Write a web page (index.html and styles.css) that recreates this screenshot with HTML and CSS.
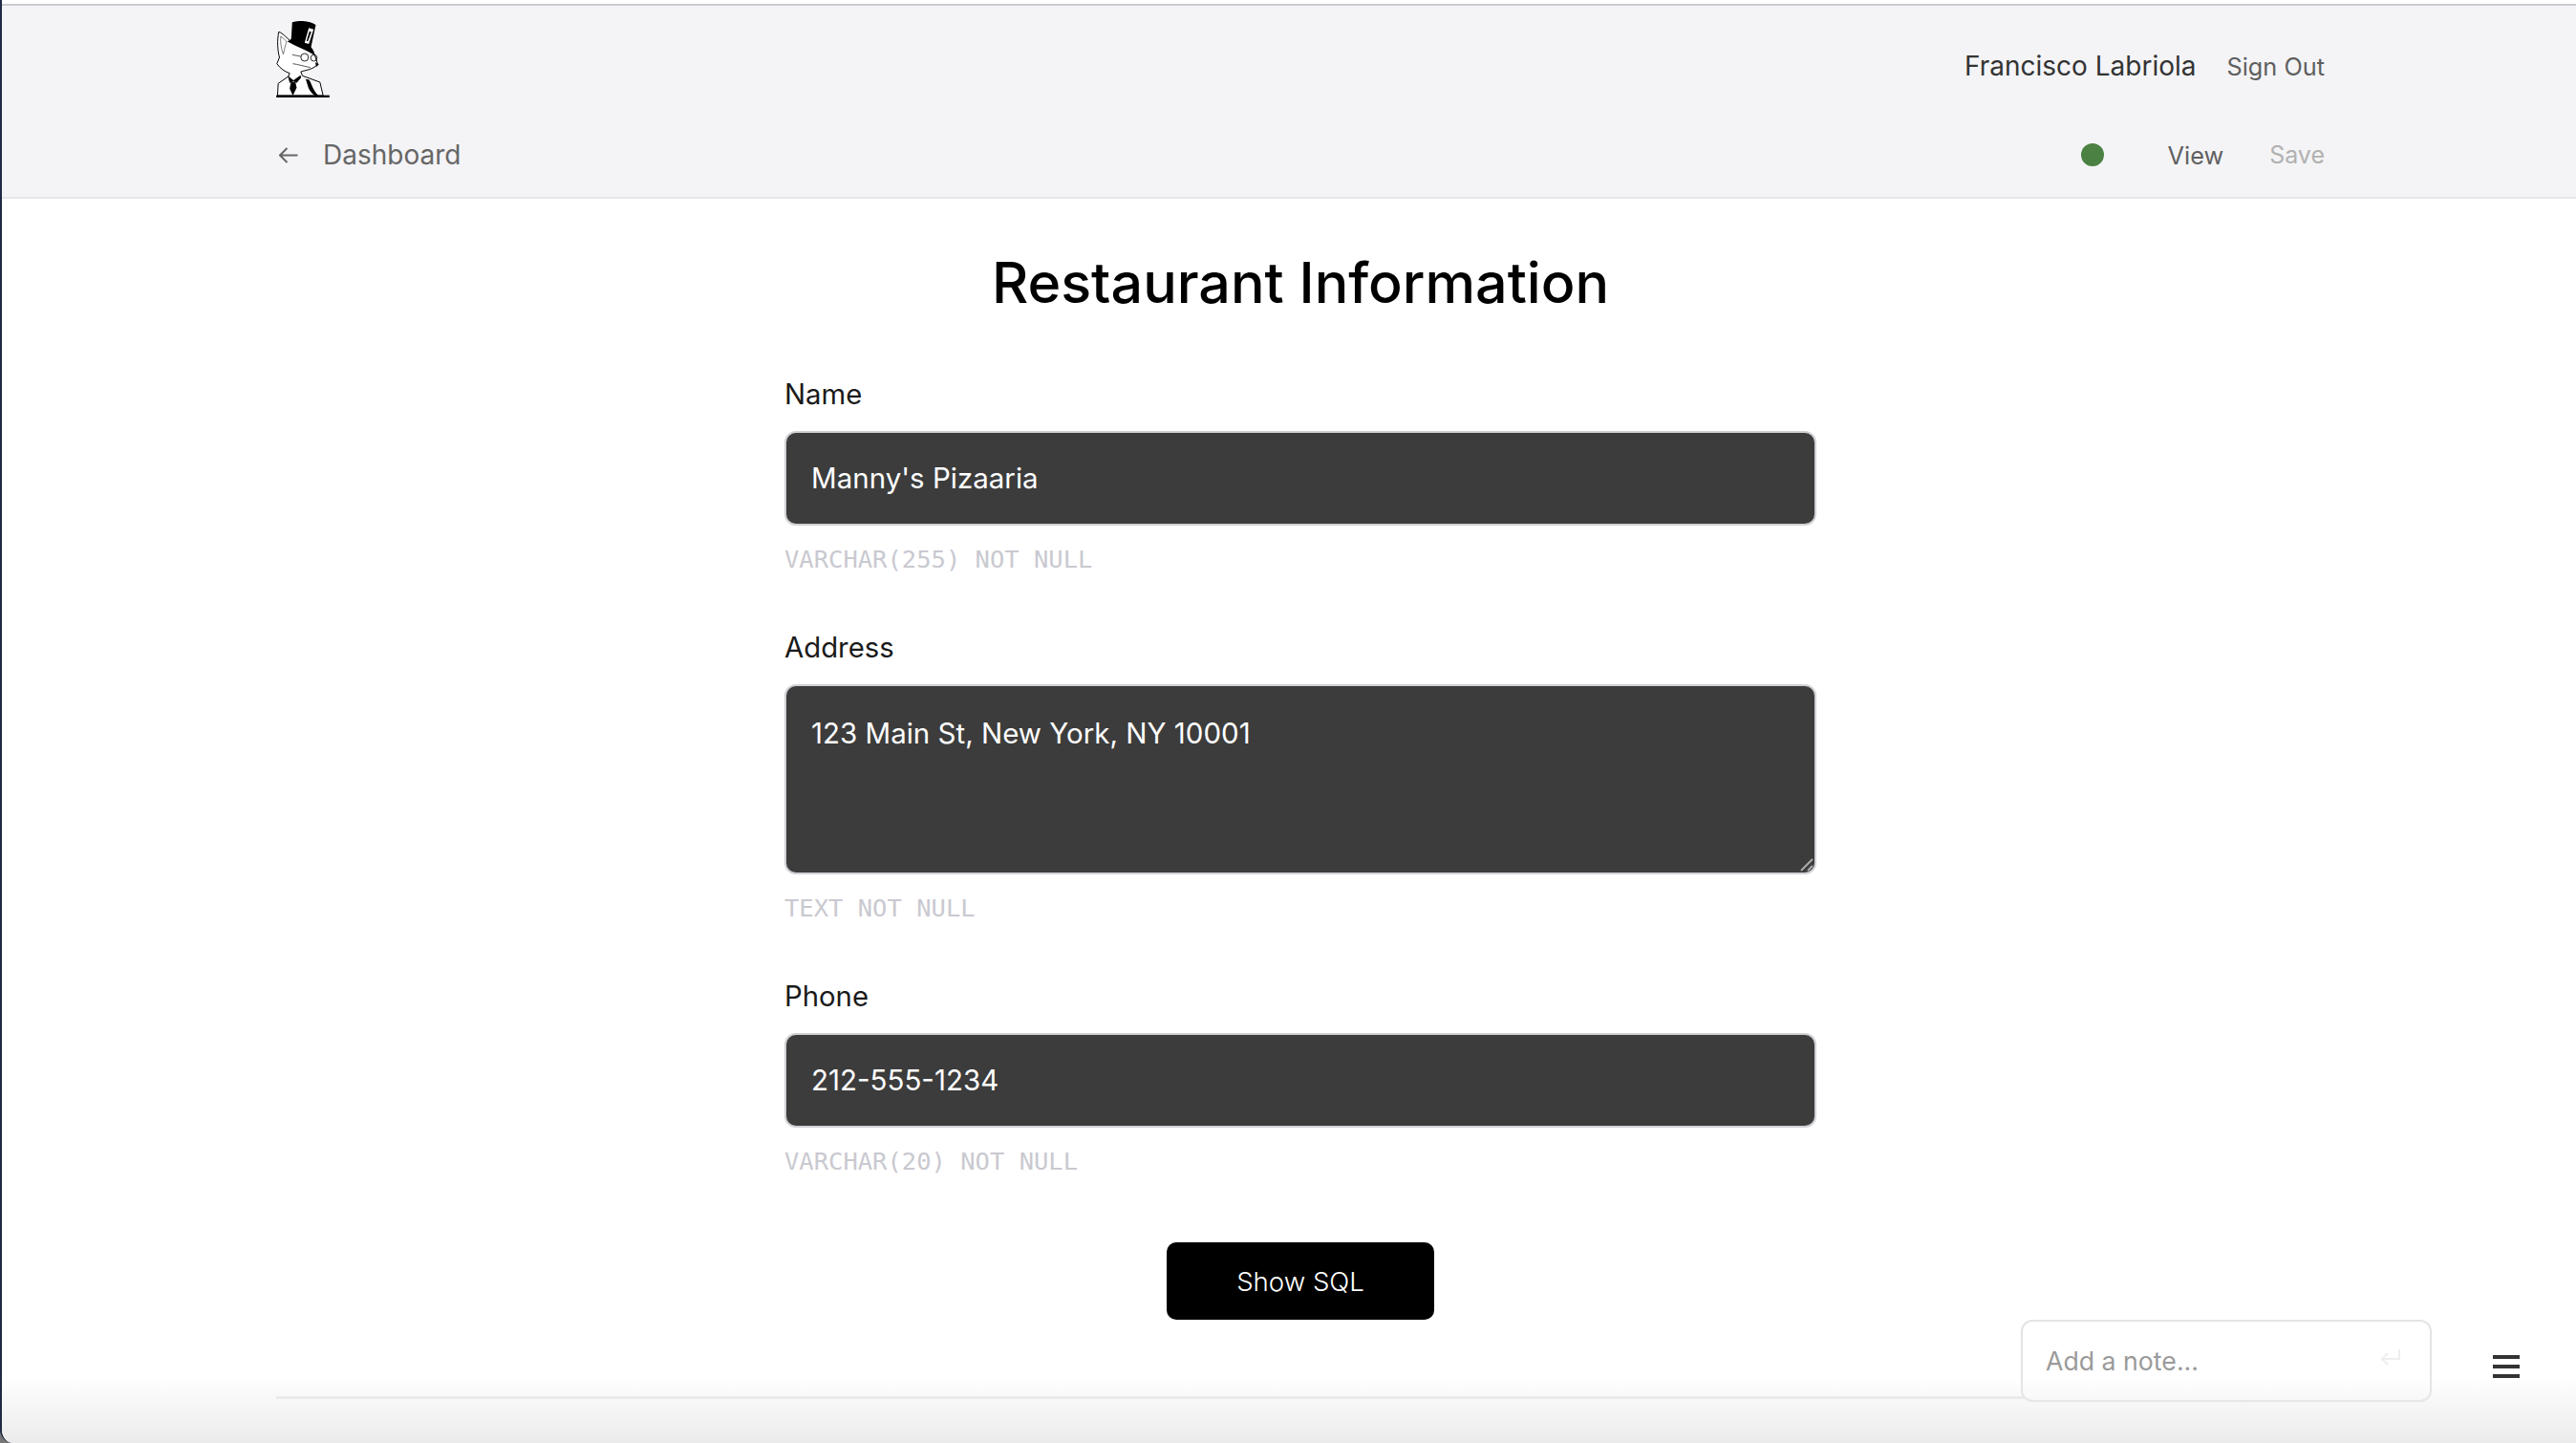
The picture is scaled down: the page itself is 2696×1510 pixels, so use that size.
FILE: index.html
```html
<!DOCTYPE html>
<html lang="en">
  <head>
    <meta charset="UTF-8" />
    <meta name="viewport" content="width=device-width, initial-scale=1.0" />
    <title>Restaurant Information</title>
    <link rel="stylesheet" href="styles.css">
  </head>
  <body>
    <div class="window">
      <header class="topbar">
        <div class="topbar-row user-row">
          <svg class="logo" viewBox="58 36 167 240" width="56" height="80">
            <path d="M66 70C60 95 62 130 68 150L60 170C70 185 85 195 100 200L96 210L64 232L62 270H205L195 228L140 208L135 195C150 190 170 190 188 172L178 140L108 104C92 90 78 74 66 70Z" fill="#fff" stroke="#000" stroke-width="3"/>
            <path d="M72 84C70 105 74 125 80 140C84 122 88 108 90 100C84 94 78 88 72 84Z" fill="#fff" stroke="#000" stroke-width="1.5"/>
            <path d="M108 40C130 32 166 36 182 48L167 118C175 128 178 135 179 144C155 128 118 115 92 100C98 98 104 95 105 90Z" fill="#000"/>
            <path d="M160 58L175 62L160 108L147 104Z" fill="#fff"/>
            <path d="M162 68L168 70L157 100L153 98Z" fill="#000"/>
            <circle cx="147" cy="150" r="12" fill="none" stroke="#000" stroke-width="2.5"/>
            <circle cx="176" cy="152" r="10" fill="none" stroke="#000" stroke-width="2.5"/>
            <path d="M108 142L135 147M110 170C125 172 145 178 165 182" fill="none" stroke="#000" stroke-width="2"/>
            <path d="M180 166L192 172L184 180Z" fill="#000"/>
            <path d="M94 208L112 222L134 206L136 214L122 230L112 226L100 230Z" fill="#000"/>
            <path d="M104 228L118 228L122 245L110 270L100 248Z" fill="#000"/>
            <path d="M150 218C158 235 156 255 180 270L190 270C170 250 170 232 160 220Z" fill="#000"/>
            <rect x="58" y="269" width="167" height="7" fill="#000"/>
          </svg>
          <div class="user">
            <span class="user-name">Francisco Labriola</span>
            <a class="link" href="#">Sign Out</a>
          </div>
        </div>
        <div class="topbar-row nav-row">
          <a class="back" href="#">
            <svg class="back-icon" viewBox="0 0 20 17" width="20" height="17">
              <path d="M19.5 8.5H1.5M8.5 1L1 8.5L8.5 16" fill="none" stroke="#666" stroke-width="2"/>
            </svg>
            <span>Dashboard</span>
          </a>
          <div class="actions">
            <span class="status-dot"></span>
            <a class="link view" href="#">View</a>
            <a class="link save" href="#">Save</a>
          </div>
        </div>
      </header>

      <main class="content">
        <h1 class="title">Restaurant Information</h1>
        <form class="form">
          <div class="field">
            <label class="field-label">Name</label>
            <div class="field-value">Manny's Pizaaria</div>
            <div class="field-type">VARCHAR(255) NOT NULL</div>
          </div>
          <div class="field">
            <label class="field-label">Address</label>
            <div class="field-value field-area">
              123 Main St, New York, NY 10001
              <svg class="resize-grip" viewBox="0 0 14 14" width="14" height="14">
                <path d="M1 13L13 1M8 13L13 8" fill="none" stroke="#aaa" stroke-width="2"/>
              </svg>
            </div>
            <div class="field-type">TEXT NOT NULL</div>
          </div>
          <div class="field">
            <label class="field-label">Phone</label>
            <div class="field-value">212-555-1234</div>
            <div class="field-type">VARCHAR(20) NOT NULL</div>
          </div>
          <button class="sql-btn" type="button">Show SQL</button>
        </form>
        <div class="divider"></div>
      </main>

      <div class="note">
        <span class="note-text">Add a note...</span>
        <svg class="note-icon" viewBox="0 0 21 17" width="21" height="17">
          <path d="M20 0V10H2M8 4L2 10L8 16" fill="none" stroke="#eee" stroke-width="2"/>
        </svg>
      </div>
      <div class="menu-icon">
        <span></span>
        <span></span>
        <span></span>
      </div>
      <div class="bottom-fade"></div>
    </div>
  </body>
</html>
```

FILE: styles.css
```css
* {
  margin: 0;
  padding: 0;
  box-sizing: border-box;
}
html,
body {
  height: 1510px;
  overflow: hidden;
  background: #777;
}
body {
  font-family: Inter, "Liberation Sans", sans-serif;
  color: #111;
}
a {
  text-decoration: none;
}
.window {
  position: relative;
  height: 1510px;
  padding-top: 4px;
  background: #fff;
  border-left: 2px solid #1f2a44;
  overflow: hidden;
  border-bottom-left-radius: 14px;
}
.topbar {
  height: 204px;
  background: #f4f4f6;
  border-top: 2px solid #cbcbcf;
  border-bottom: 2px solid #e6e6e9;
  padding: 16px 263px 0 287px;
}
.topbar-row {
  display: flex;
  justify-content: space-between;
  align-items: center;
}
.user-row {
  height: 80px;
}
.nav-row {
  margin-top: 36px;
  height: 48px;
}
.logo {
  display: block;
}
.user {
  display: flex;
  align-items: center;
  gap: 32px;
  padding-top: 14px;
}
.user-name {
  font-size: 28px;
  color: #333;
}
.link {
  font-size: 25.3px;
  color: #5f5f5f;
}
.back {
  display: flex;
  align-items: center;
  gap: 26px;
  padding-left: 3px;
  font-size: 28px;
  color: #666;
}
.back-icon {
  display: block;
}
.actions {
  display: flex;
  align-items: center;
}
.status-dot {
  width: 24px;
  height: 24px;
  border-radius: 50%;
  background: #4b8142;
  margin-right: 67px;
}
.view {
  margin-right: 48px;
}
.save {
  font-size: 25px;
  color: #b1b1b1;
}
.content {
  padding: 52px 263px 0 287px;
}
.title {
  font-size: 59.2px;
  font-weight: 500;
  line-height: 72px;
  text-align: center;
  color: #000;
}
.form {
  width: 1080px;
  margin: 63px auto 0;
  display: flex;
  flex-direction: column;
  gap: 60px;
}
.field {
  display: flex;
  flex-direction: column;
}
.field-label {
  font-size: 29.3px;
  line-height: 36px;
  color: #1a1a1a;
  margin-bottom: 20px;
}
.field-value {
  height: 99px;
  background: #3c3c3c;
  border: 2px solid #d0d0d5;
  border-radius: 12px;
  padding: 0 26px;
  font-size: 29.5px;
  line-height: 95px;
  color: #fff;
}
.field-area {
  position: relative;
  height: 199px;
  padding-top: 31px;
  line-height: 36px;
}
.resize-grip {
  position: absolute;
  right: 1px;
  bottom: 1px;
}
.field-type {
  margin-top: 20px;
  font-family: "DejaVu Sans Mono", "Liberation Mono", monospace;
  font-size: 25.5px;
  line-height: 30px;
  color: #c9c9d0;
}
.sql-btn {
  align-self: center;
  width: 280px;
  height: 81px;
  margin-top: 10px;
  background: #000;
  color: #fff;
  border: 0;
  border-radius: 10px;
  font-family: inherit;
  font-size: 27.6px;
  font-weight: 300;
}
.divider {
  height: 3px;
  margin-top: 80px;
  background: #e9e9e9;
}
.note {
  position: absolute;
  left: 2113px;
  top: 1381px;
  width: 430px;
  height: 86px;
  padding: 0 24px;
  display: flex;
  align-items: center;
  justify-content: space-between;
  background: #fff;
  border: 2px solid #e4e4e4;
  border-radius: 12px;
}
.note-text {
  font-size: 26.7px;
  color: #9a9a9a;
}
.note-icon {
  margin: -8px 7px 0 0;
}
.menu-icon {
  position: absolute;
  left: 2607px;
  top: 1418px;
  width: 28px;
  height: 24px;
  display: flex;
  flex-direction: column;
  justify-content: space-between;
}
.menu-icon span {
  height: 4px;
  background: #333;
}
.bottom-fade {
  position: absolute;
  left: 0;
  right: 0;
  bottom: 0;
  height: 70px;
  background: linear-gradient(to bottom, rgba(235, 235, 235, 0), rgba(235, 235, 235, 1));
  pointer-events: none;
}
```
